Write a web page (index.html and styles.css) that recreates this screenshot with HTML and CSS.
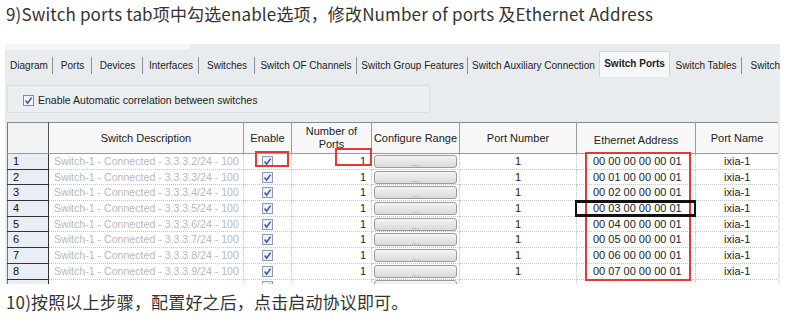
FILE: index.html
```html
<!DOCTYPE html>
<html lang="zh-CN">
<head>
  <meta charset="UTF-8">
  <title>Switch Ports 配置</title>
  <link rel="stylesheet" href="styles.css">
</head>
<body>
  <p class="step first">9)Switch ports tab项中勾选enable选项，修改Number of ports 及Ethernet Address</p>

  <div class="shot">
    <div class="topstrip"></div>
    <ul class="tabs">
      <li class="t-diagram">Diagram</li>
      <li class="t-ports">Ports</li>
      <li class="t-devices">Devices</li>
      <li class="t-ifaces">Interfaces</li>
      <li class="t-switches">Switches</li>
      <li class="t-ofch">Switch OF Channels</li>
      <li class="t-group">Switch Group Features</li>
      <li class="t-aux">Switch Auxiliary Connection</li>
      <li class="t-sports active">Switch Ports</li>
      <li class="t-tables">Switch Tables</li>
      <li class="t-more">Switch</li>
    </ul>

    <div class="opts">
      <label class="corr">
        <svg class="cb" width="11" height="11" viewBox="0 0 11 11"><rect x="0.5" y="0.5" width="10" height="10" fill="#f4f6fa" stroke="#7f8ba6"/><path d="M2.6 5.6 L4.6 8.2 L8.6 2.6" fill="none" stroke="#3d5aa6" stroke-width="1.6"/></svg>
        Enable Automatic correlation between switches
      </label>
    </div>

    <div class="gridwrap">
      <table class="grid">
        <colgroup>
          <col class="c-row"><col class="c-desc"><col class="c-en"><col class="c-num"><col class="c-cfg"><col class="c-pn"><col class="c-eth"><col class="c-name">
        </colgroup>
        <thead>
          <tr>
            <th class="corner"></th>
            <th>Switch Description</th>
            <th>Enable</th>
            <th class="two">Number of<br>Ports</th>
            <th>Configure Range</th>
            <th>Port Number</th>
            <th class="low">Ethernet Address</th>
            <th>Port Name</th>
          </tr>
        </thead>
        <tbody id="rows"></tbody>
      </table>
    </div>

    <div class="mark red m-enable"></div>
    <div class="mark red m-ports"></div>
    <div class="mark red m-eth"></div>
    <div class="mark black m-sel"></div>
  </div>

  <p class="step">10)按照以上步骤，配置好之后，点击启动协议即可。</p>

  <script>
    const rows = document.getElementById("rows");
    const check = '<svg width="11" height="11" viewBox="0 0 11 11"><rect x="0.5" y="0.5" width="10" height="10" fill="#eef1f7" stroke="#8e99b3"/><path d="M2.6 5.6 L4.6 8.2 L8.6 2.6" fill="none" stroke="#3d5aa6" stroke-width="1.6"/></svg>';

    for (let i = 1; i <= 8; i++) {
      const hex = String(i - 1).padStart(2, "0");
      rows.innerHTML += `
        <tr>
          <td class="rh">${i}</td>
          <td class="desc">Switch-1 - Connected - 3.3.3.${i + 1}/24 - 100</td>
          <td class="en">${check}</td>
          <td class="num">1</td>
          <td class="cfg"><span class="btn">...</span></td>
          <td class="pn">1</td>
          <td class="eth">00 ${hex} 00 00 00 01</td>
          <td class="name">ixia-1</td>
        </tr>`;
    }
    // the next row is only partly visible under the edge of the grid
    rows.innerHTML += `
      <tr class="cut">
        <td class="rh"></td><td class="desc"></td><td class="en">${check}</td><td class="num"></td>
        <td class="cfg"><span class="btn"></span></td><td class="pn"></td><td class="eth"></td><td class="name"></td>
      </tr>`;
  </script>
</body>
</html>
```

FILE: styles.css
```css
body {
  margin: 0;
  background: #fff;
  font-family: "Noto Sans CJK SC", "Noto Sans", sans-serif;
  color: #333;
}
.step {
  margin: 0;
  padding-left: 6px;
  font-size: 17px;
  line-height: 24px;
  letter-spacing: 0.15px;
}
.step.first { padding-top: 2px; }

.shot {
  position: relative;
  margin: 18px 0 6px 5px;
  width: 775px;
  height: 240px;
  background: #e9ecef;
  font-family: "Liberation Sans", Arial, sans-serif;
  color: #222;
  overflow: hidden;
}
.topstrip {
  height: 6px;
  width: 185px;
  background: #f4f5f7;
}

/* tabs */
.tabs {
  display: flex;
  list-style: none;
  margin: 0;
  padding: 0;
  height: 27px;
  font-size: 10px;
  white-space: nowrap;
}
.tabs li {
  display: flex;
  align-items: center;
  justify-content: center;
  box-sizing: border-box;
  height: 27px;
  padding-top: 3px;
  position: relative;
}
.tabs li::after {
  content: "";
  position: absolute;
  right: 0;
  top: 7px;
  height: 17px;
  border-right: 1px solid #8c8f94;
}
.tabs li.active {
  background: #f7f8fa;
  border: 1px solid #d2d6dc;
  border-bottom: none;
  font-weight: bold;
  height: 26px;
  margin-top: 1px;
  align-items: flex-start;
  padding-top: 6px;
}
.tabs li.active::after,
.tabs .t-aux::after,
.tabs .t-more::after { display: none; }
.t-diagram { width: 48px; }
.t-ports { width: 39px; }
.t-devices { width: 51px; }
.t-ifaces { width: 56px; }
.t-switches { width: 56px; }
.t-ofch { width: 102px; }
.t-group { width: 111px; }
.t-aux { width: 131px; }
.t-sports { width: 71px; }
.t-tables { width: 72px; }
.tabs .t-more { width: 38px; justify-content: flex-end; }

/* options */
.opts {
  height: 45px;
  padding: 8px 0 0 2px;
  box-sizing: border-box;
}
.corr {
  display: flex;
  align-items: center;
  gap: 4px;
  box-sizing: border-box;
  width: 423px;
  height: 28px;
  padding-left: 15px;
  padding-top: 2px;
  border: 1px solid #d9dde2;
  background: #eceff2;
  font-size: 10.5px;
  color: #222;
}

/* grid */
.gridwrap {
  margin-left: 2px;
  width: 771px;
  height: 162px;
  overflow: hidden;
  background: #fff;
}
.grid {
  width: 771px;
  table-layout: fixed;
  border-collapse: collapse;
  font-size: 11px;
}
.c-row { width: 41px; }
.c-desc { width: 195px; }
.c-en { width: 48px; }
.c-num { width: 80px; }
.c-cfg { width: 88px; }
.c-pn { width: 117px; }
.c-eth { width: 119px; }
.c-name { width: 83px; }

.grid th {
  height: 26px;
  padding: 0;
  font-weight: normal;
  background: #f8f8f8;
  border: 1px solid #9a9a9a;
  border-top: 1px solid #8a8a8a;
  line-height: 13px;
  color: #222;
}
.grid th.corner {
  background: #f1f2f4;
  border-left: 1px solid #777;
  border-right: 1px solid #555;
}
.grid th.low { padding-top: 4px; }
.grid td {
  height: 14.7px;
  padding: 0;
  line-height: 13px;
  border-right: 1px dotted #c4c4c4;
  border-bottom: 1px dotted #c4c4c4;
  white-space: nowrap;
  overflow: hidden;
}
.grid td.rh {
  background: #e9eef4;
  border: 1px solid #333;
  border-left: 1px solid #777;
  padding-left: 5px;
  color: #111;
}
.grid td.desc {
  color: #b9b9b9;
  padding-left: 5px;
  font-size: 10.6px;
}
.en svg { display: block; margin: 0 auto; }
.grid td.num {
  text-align: right;
  padding-right: 5px;
}
.grid td.cfg { padding-left: 2px; }
.btn {
  display: block;
  box-sizing: border-box;
  width: 83px;
  height: 13px;
  border: 1px solid #9b9b9b;
  border-radius: 3px;
  background: linear-gradient(#f5f5f5, #d9d9d9);
  color: #999;
  font-size: 9px;
  line-height: 14px;
  text-align: center;
}
.pn { text-align: center; }
.grid td.eth { padding-left: 16px; }
.grid td.name { text-align: center; border-right: none; }

/* annotation marks */
.mark {
  position: absolute;
  box-sizing: border-box;
  border: 2px solid #e53935;
}
.mark.black { border-color: #111; border-width: 3px 2px; }
.m-enable { left: 250px; top: 107px; width: 34px; height: 16px; }
.m-ports { left: 330px; top: 104px; width: 37px; height: 18px; }
.m-eth { left: 580px; top: 108px; width: 106px; height: 129px; }
.m-sel { left: 570px; top: 156px; width: 121px; height: 17px; }
```
